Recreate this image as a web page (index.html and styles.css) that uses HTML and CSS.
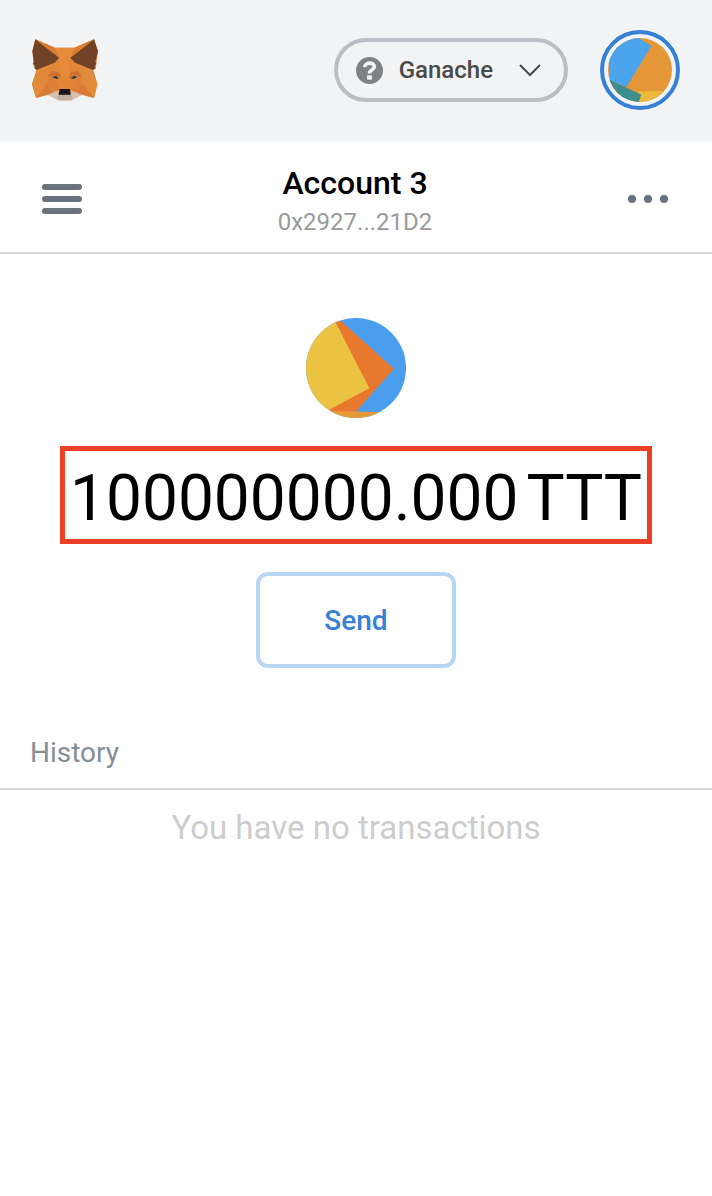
FILE: index.html
```html
<!DOCTYPE html>
<html lang="en">
<head>
<meta charset="utf-8">
<title>Wallet</title>
<link rel="stylesheet" href="styles.css">
</head>
<body>
<header class="header">
  <svg class="logo" viewBox="33 27 201 186" aria-hidden="true">
    <path fill="#e18737" d="M46 28 105 53H163L222 28 234 64 227 116 220 120 232 162 222 204 185 194 154 211H116L84 194 48 204 36 162 50 120 41 108 37 64Z"/>
    <path fill="#714225" d="M46 28 118 83 103 99 50 120 43 115 45 108 39 102 42 95 37 64ZM222 28 151 83 166 99 218 120 227 114 223 108 229 102 226 95 234 64Z"/>
    <path fill="#dd7c30" d="M46 28 105 53 118 83ZM222 28 163 53 151 83Z"/>
    <path fill="#e58b3b" d="M105 53H163L151 83 146 140H122L118 83ZM36 162 83 160 48 204ZM232 162 186 160 222 204Z"/>
    <path fill="#e28a3c" d="M50 120 103 99 83 123 83 160 36 162ZM218 120 166 99 185 123 186 160 232 162Z"/>
    <path fill="#cf7132" d="M94 123 118 127 122 145 83 139ZM175 123 151 127 146 145 185 139Z"/>
    <path fill="#d87936" d="M83 160 98 188 48 204ZM186 160 171 188 222 204Z"/>
    <path fill="#dd8039" d="M83 160V139L106 150 116 181 98 188ZM186 160V139L162 150 153 181 171 188Z"/>
    <path fill="#d6c0b0" d="M84 194 98 188 116 181V194H152V181L171 188 185 194 154 211H116Z"/>
    <path fill="#c0aea0" d="M111 200 118 194H150L158 200 154 211H116Z"/>
    <path fill="#26384a" d="M97 143 108 137 116 148ZM172 143 161 137 152 148Z"/>
    <path fill="#171717" d="M119 177H150L152 194H116Z"/>
  </svg>
  <button class="network" type="button">
    <svg class="network-icon" viewBox="0 0 28 28" aria-hidden="true">
      <circle cx="14" cy="14" r="14" fill="#808184"/>
      <path d="M9 10.500C9.500 5 19 5 19 10.300C19 13.600 14 13 14 17" fill="none" stroke="#f2f3f4" stroke-width="3.800"/>
      <path d="M11.500 19h5v4.500h-5z" fill="#f2f3f4"/>
    </svg>
    <span>Ganache</span>
    <svg class="chevron" viewBox="0 0 22 14" aria-hidden="true">
      <path d="M1 2 11 12 21 2" fill="none" stroke="#4a4a4a" stroke-width="2"/>
    </svg>
  </button>
  <button class="avatar" type="button" aria-label="My accounts">
    <svg class="avatar-art" viewBox="54 54 192 192" aria-hidden="true">
      <path fill="#e59637" d="M54 54H246V246H54Z"/>
      <path fill="#4ca4ed" d="M50 50H140L184 78 109 202 60 180Z"/>
      <path fill="#ebb93d" d="M145 214 246 212V246H145Z"/>
      <path fill="#3e8e8e" d="M54 177 154 224 145 250H54Z"/>
    </svg>
  </button>
</header>
<nav class="menu-bar">
  <button class="icon-button" type="button" aria-label="Menu">
    <svg class="menu-icon" viewBox="0 0 40 30" aria-hidden="true">
      <path d="M3 3H37M3 15H37M3 27H37" stroke="#6a737d" stroke-width="6" stroke-linecap="round"/>
    </svg>
  </button>
  <button class="account" type="button">
    <span class="account-name">Account 3</span>
    <span class="account-address">0x2927...21D2</span>
  </button>
  <button class="icon-button" type="button" aria-label="Account options">
    <svg class="dots-icon" viewBox="0 0 40 8" aria-hidden="true">
      <g fill="#6a737d"><circle cx="4" cy="4" r="4"/><circle cx="20" cy="4" r="4"/><circle cx="36" cy="4" r="4"/></g>
    </svg>
  </button>
</nav>
<main>
  <section class="overview">
    <svg class="token-art" viewBox="30 30 300 300" aria-hidden="true">
      <path fill="#4a9eed" d="M30 30H330V330H30Z"/>
      <path fill="#e8782e" d="M110 20 134 38 294 182 180 311 90 320Z"/>
      <path fill="#ecc243" d="M30 30H112L220 241 98 306 30 330Z"/>
      <path fill="#e59a37" d="M90 309 250 312V330H90Z"/>
    </svg>
    <div class="balance"><span>100000000.000</span><span>TTT</span></div>
    <button class="send" type="button">Send</button>
  </section>
  <section>
    <h2 class="history-title">History</h2>
    <p class="empty">You have no transactions</p>
  </section>
</main>
</body>
</html>
```
FILE: styles.css
```css
* {
  box-sizing: border-box;
}

body {
  margin: 0;
  background: #fff;
  color: #000;
  font-family: Roboto, "Liberation Sans", sans-serif;
}

button {
  margin: 0;
  padding: 0;
  border: 0;
  background: none;
  color: inherit;
  font: inherit;
  cursor: pointer;
}

svg {
  display: block;
}

.header {
  display: flex;
  align-items: center;
  gap: 32px;
  padding: 30px 32px 32px 31px;
  background: #f2f3f4;
}

.logo {
  width: 67px;
  height: 62px;
  margin-right: auto;
}

.network {
  display: flex;
  align-items: center;
  height: 64px;
  padding: 0 23px 0 18px;
  border: 4px solid #bbbec5;
  border-radius: 32px;
  color: #4a4a4a;
  font-size: 24px;
  font-weight: 500;
}

.network-icon {
  width: 27px;
  height: 27px;
  margin-right: 16px;
}

.chevron {
  width: 22px;
  height: 14px;
  margin-left: 26px;
}

.avatar {
  display: grid;
  place-items: center;
  width: 80px;
  height: 80px;
  border: 4px solid #3680d6;
  border-radius: 50%;
}

.avatar-art {
  width: 64px;
  height: 64px;
  border-radius: 50%;
}

.menu-bar {
  display: flex;
  align-items: center;
  justify-content: space-between;
  padding: 18px 44px 14px 42px;
  border-bottom: 2px solid #d6d8dc;
}

.icon-button {
  width: 40px;
}

.menu-icon {
  width: 40px;
  height: 30px;
}

.dots-icon {
  width: 40px;
  height: 8px;
}

.account {
  display: flex;
  flex-direction: column;
  align-items: center;
}

.account-name {
  font-size: 32px;
  font-weight: 500;
  line-height: 46px;
}

.account-address {
  color: #989a9b;
  font-size: 24px;
  line-height: 32px;
}

.overview {
  display: flex;
  flex-direction: column;
  align-items: center;
  padding: 64px 16px;
}

.token-art {
  width: 100px;
  height: 100px;
  border-radius: 50%;
}

.balance {
  display: flex;
  gap: 8px;
  margin: 28px 0;
  padding: 8px 5px 0;
  border: 5px solid #eb4026;
  font-size: 64px;
  line-height: 80px;
}

.send {
  width: 200px;
  height: 96px;
  border: 4px solid #b7d6f1;
  border-radius: 12px;
  color: #3680d6;
  font-size: 28px;
  font-weight: 500;
}

.history-title {
  margin: 0;
  padding: 0 30px 15px;
  border-bottom: 2px solid #d6d8dc;
  color: #858d97;
  font-size: 28px;
  font-weight: 400;
  line-height: 41px;
}

.empty {
  margin: 16px 0;
  color: #cdcdcd;
  font-size: 33px;
  line-height: 44px;
  text-align: center;
}
```
